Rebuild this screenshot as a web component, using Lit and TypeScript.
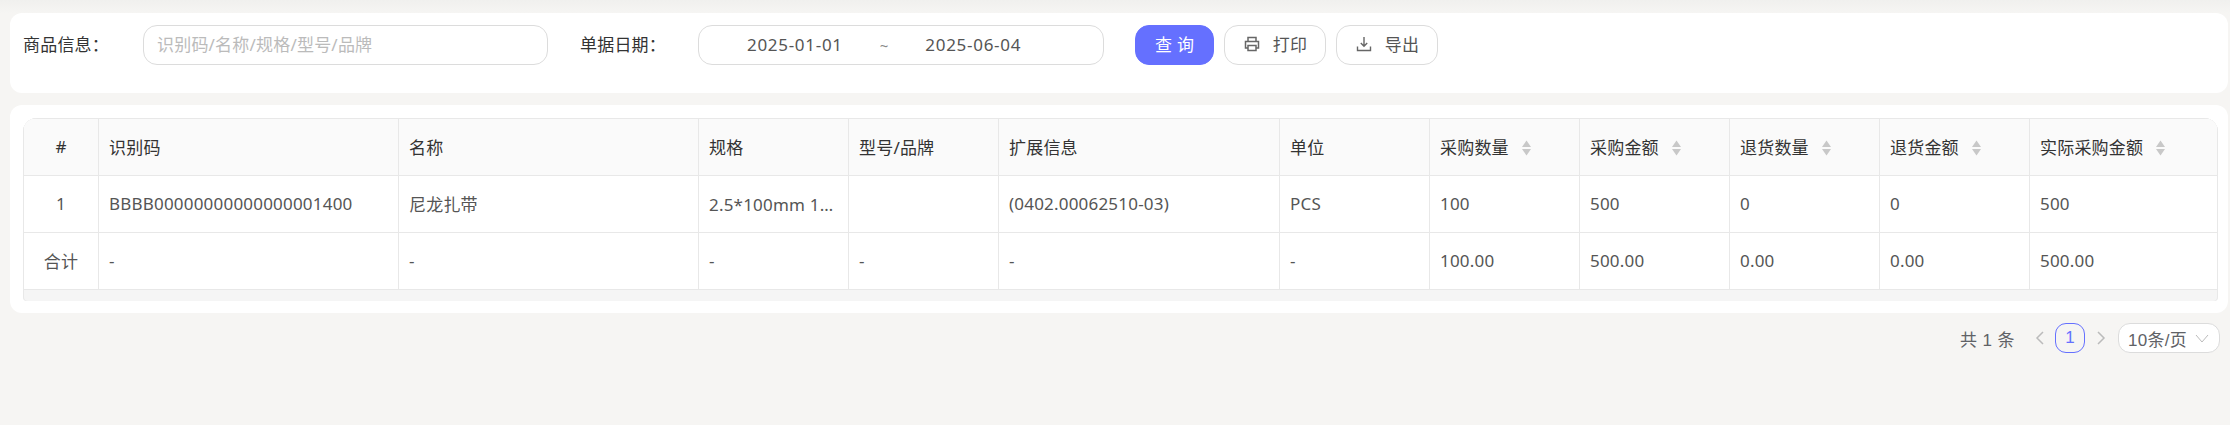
import { LitElement, html, css } from 'lit';
import { customElement } from 'lit/decorators.js';

// column widths taken from the header grid lines
const COLUMNS = [
  { title: '#', width: 75, center: true },
  { title: '识别码', width: 300 },
  { title: '名称', width: 300 },
  { title: '规格', width: 150 },
  { title: '型号/品牌', width: 150 },
  { title: '扩展信息', width: 281 },
  { title: '单位', width: 150 },
  { title: '采购数量', width: 150, sort: true },
  { title: '采购金额', width: 150, sort: true },
  { title: '退货数量', width: 150, sort: true },
  { title: '退货金额', width: 150, sort: true },
  { title: '实际采购金额', width: 187, sort: true },
];

const ROWS = [
  ['1', 'BBBB00000000000000001400', '尼龙扎带', '2.5*100mm 100条/包', '', '(0402.00062510-03)', 'PCS', '100', '500', '0', '0', '500'],
  ['合计', '-', '-', '-', '-', '-', '-', '100.00', '500.00', '0.00', '0.00', '500.00'],
];

@customElement('app-root')
export class AppRoot extends LitElement {
  static styles = css`
    :host {
      display: block;
      min-height: 425px;
      box-sizing: border-box;
      padding: 13px 2px 0 10px;
      background: linear-gradient(#f0f0ee, #f6f5f3 13px);
      background-color: #f6f5f3;
      font-family: 'Noto Sans', 'Noto Sans CJK SC', sans-serif;
      font-size: 17px;
      letter-spacing: 0.2px;
      color: #555;
    }
    .card {
      background: #fff;
      border-radius: 12px;
    }
    .filters {
      height: 80px;
      box-sizing: border-box;
      padding: 12px 13px;
      display: flex;
      align-items: flex-start;
    }
    .label {
      height: 40px;
      line-height: 40px;
      color: #333;
    }
    .label.goods { width: 120px; }
    .label.date { width: 118px; margin-left: 32px; }
    .box {
      height: 40px;
      box-sizing: border-box;
      border: 1px solid #dcdcdc;
      border-radius: 14px;
      line-height: 38px;
    }
    .input {
      width: 405px;
      padding-left: 13px;
      color: #bbb;
    }
    .range {
      width: 406px;
      padding-left: 48px;
      display: flex;
      gap: 37px;
      letter-spacing: 0.7px;
    }
    .tilde { font-size: 15px; letter-spacing: 0; color: #888; }
    .btn {
      height: 40px;
      box-sizing: border-box;
      border: 1px solid #dcdcdc;
      border-radius: 14px;
      display: flex;
      align-items: center;
      justify-content: center;
      gap: 12px;
      width: 102px;
      margin-left: 10px;
      padding-bottom: 3px;
      color: #555;
    }
    .btn svg { width: 18px; height: 18px; }
    .btn.primary {
      width: 79px;
      margin-left: 31px;
      background: #6570ff;
      border-color: #6570ff;
      color: #fff;
      letter-spacing: 5px;
      padding-left: 5px;
    }
    .list {
      margin-top: 12px;
      height: 208px;
      box-sizing: border-box;
      padding: 13px 10px 12px 13px;
    }
    .wrap {
      border-radius: 14px 14px 4px 4px;
      box-shadow: inset 0 1px 0 #e8e8e8, inset 1px 0 0 #e8e8e8, inset -1px 0 0 #e8e8e8;
      overflow: hidden;
      background: #f5f5f5;
      height: 183px;
      box-sizing: border-box;
      padding: 1px 1px 0;
    }
    table {
      border-collapse: separate;
      border-spacing: 0;
      table-layout: fixed;
      width: 100%;
    }
    th, td {
      height: 57px;
      box-sizing: border-box;
      padding: 0 10px 2px;
      border-right: 1px solid #e8e8e8;
      border-bottom: 1px solid #e8e8e8;
      white-space: nowrap;
      overflow: hidden;
      text-overflow: ellipsis;
      font-weight: 400;
      text-align: left;
      background: #fff;
    }
    th { background: #fafafa; color: #333; }
    th:last-child, td:last-child { border-right: 0; }
    .center { text-align: center; }
    .sort {
      display: inline-block;
      width: 11px;
      height: 16px;
      margin-left: 12px;
      vertical-align: -2px;
    }
    .pager {
      display: flex;
      align-items: center;
      justify-content: flex-end;
      height: 30px;
      margin: 10px 8px 0 0;
      font-family: 'Liberation Sans', 'Noto Sans CJK SC', sans-serif;
      letter-spacing: 0;
      color: #606266;
    }
    .total { letter-spacing: 0.4px; margin-right: 20px; }
    .chev { width: 9px; height: 14px; }
    .page {
      width: 30px;
      height: 30px;
      box-sizing: border-box;
      margin: 0 12px 0 11px;
      border: 1px solid #6570ff;
      border-radius: 11px;
      color: #6570ff;
      text-align: center;
      line-height: 28px;
    }
    .size {
      width: 102px;
      height: 30px;
      box-sizing: border-box;
      margin-left: 12px;
      padding-left: 9px;
      border: 1px solid #dcdcdc;
      border-radius: 12px;
      background: #fff;
      display: flex;
      align-items: center;
      gap: 8px;
      letter-spacing: 0.3px;
    }
    .size svg { width: 14px; height: 9px; }
  `;

  sortIcon() {
    return html`<svg class="sort" viewBox="0 0 10 16">
      <path d="M5 0.5 9.5 7H0.5Z" fill="#c8c8c8"></path>
      <path d="M5 15.5 0.5 9H9.5Z" fill="#c8c8c8"></path>
    </svg>`;
  }

  render() {
    return html`
      <section class="card filters">
        <div class="label goods">商品信息：</div>
        <div class="box input">识别码/名称/规格/型号/品牌</div>
        <div class="label date">单据日期：</div>
        <div class="box range">
          <span>2025-01-01</span>
          <span class="tilde">~</span>
          <span>2025-06-04</span>
        </div>
        <div class="btn primary">查询</div>
        <div class="btn">
          <svg viewBox="0 0 18 18" fill="none" stroke="#666" stroke-width="1.5">
            <path d="M5 6V2.5h8V6M5 13H2.5V6.5h13V13H13"></path>
            <path d="M5 10.5h8v5H5z"></path>
          </svg>
          打印
        </div>
        <div class="btn">
          <svg viewBox="0 0 18 18" fill="none" stroke="#666" stroke-width="1.4">
            <path d="M9 2v9M5.8 8 9 11.2 12.2 8M2.5 11.5v4h13v-4"></path>
          </svg>
          导出
        </div>
      </section>

      <section class="card list">
        <div class="wrap">
          <table>
            <colgroup>
              ${COLUMNS.map((c) => html`<col style="width:${c.width}px" />`)}
            </colgroup>
            <thead>
              <tr>
                ${COLUMNS.map(
                  (c) => html`<th class=${c.center ? 'center' : ''}>${c.title}${c.sort ? this.sortIcon() : ''}</th>`
                )}
              </tr>
            </thead>
            <tbody>
              ${ROWS.map(
                (row) => html`<tr>
                  ${row.map((v, i) => html`<td class=${COLUMNS[i].center ? 'center' : ''}>${v}</td>`)}
                </tr>`
              )}
            </tbody>
          </table>
        </div>
      </section>

      <div class="pager">
        <span class="total">共 1 条</span>
        <svg class="chev" viewBox="0 0 9 14" fill="none" stroke="#bbb" stroke-width="1.5"><path d="M8 1 2 7l6 6"></path></svg>
        <span class="page">1</span>
        <svg class="chev" viewBox="0 0 9 14" fill="none" stroke="#bbb" stroke-width="1.5"><path d="M1 1l6 6-6 6"></path></svg>
        <div class="size">
          <span>10条/页</span>
          <svg viewBox="0 0 14 9" fill="none" stroke="#bbb" stroke-width="1"><path d="M1 1l6 7 6-7"></path></svg>
        </div>
      </div>
    `;
  }
}
